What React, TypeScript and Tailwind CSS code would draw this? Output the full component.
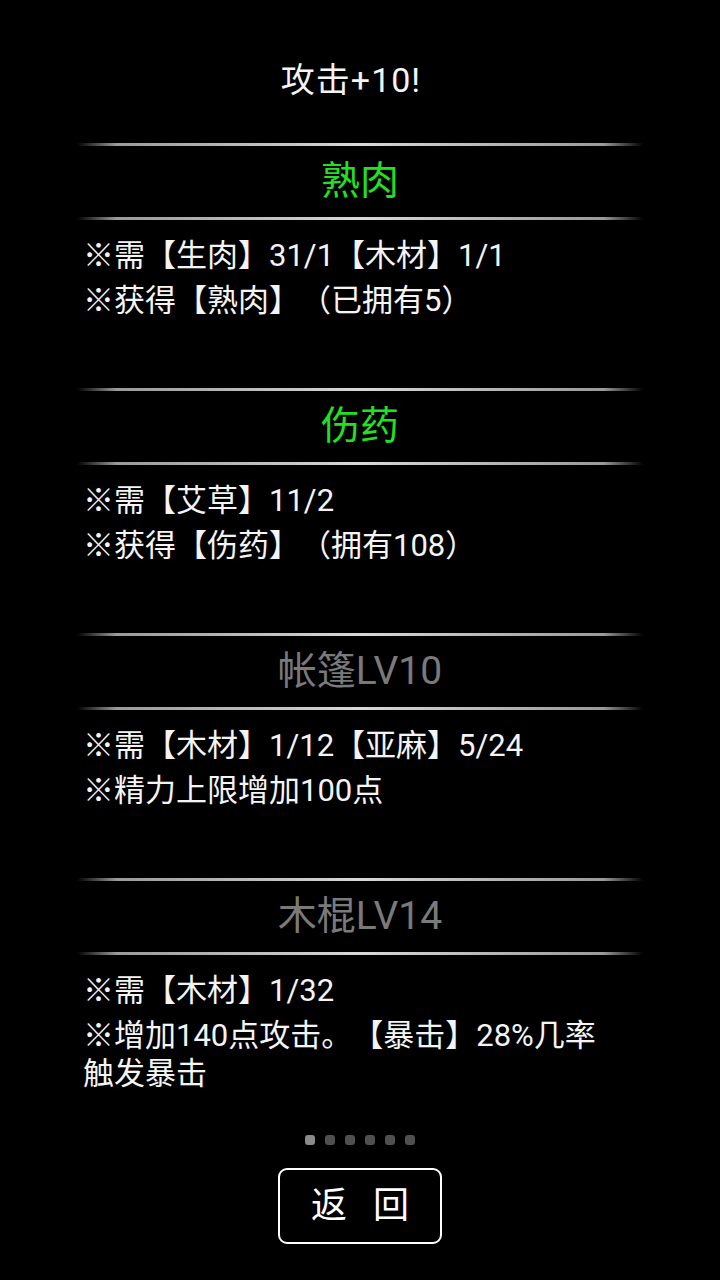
import React from "react";

type Recipe = {
  title: string;
  active: boolean;
  lines: string[];
};

const recipes: Recipe[] = [
  { title: "熟肉", active: true, lines: ["※需【生肉】31/1【木材】1/1", "※获得【熟肉】（已拥有5）"] },
  { title: "伤药", active: true, lines: ["※需【艾草】11/2", "※获得【伤药】（拥有108）"] },
  { title: "帐篷LV10", active: false, lines: ["※需【木材】1/12【亚麻】5/24", "※精力上限增加100点"] },
  { title: "木棍LV14", active: false, lines: ["※需【木材】1/32", "※增加140点攻击。【暴击】28%几率触发暴击"] },
];

function Divider() {
  return (
    <div className="h-[3px] w-full bg-[linear-gradient(to_right,transparent_0%,#9a9a9a_7%,#d8d8d8_50%,#9a9a9a_93%,transparent_100%)]" />
  );
}

function Section({ r }: { r: Recipe }) {
  return (
    <div className="flex h-[245px] flex-col">
      <Divider />
      <div
        className={
          "flex h-[71px] items-center justify-center text-[39px] leading-none " +
          (r.active ? "text-[#22e022]" : "text-[#7a7a7a]")
        }
      >
        {r.title}
      </div>
      <Divider />
      <div className="flex flex-col gap-[7px] pl-[6px] pr-[30px] pt-[17px]">
        {r.lines.map((l) => (
          <p key={l} className="text-[31px] leading-[38px] text-[#f4f4f4] [text-spacing-trim:space-all]">
            {l}
          </p>
        ))}
      </div>
    </div>
  );
}

export default function App() {
  return (
    <div
      className="flex h-[1280px] w-[720px] flex-col items-center bg-black text-white"
      style={{ fontFamily: "Roboto, 'Noto Sans CJK SC', sans-serif" }}
    >
      <div className="flex h-[143px] w-full items-start justify-center pr-[18px] pt-[60px]">
        <span className="text-[34px] leading-[40px] tracking-[1px] text-[#f4f4f4]">攻击+10!</span>
      </div>

      <div className="flex w-[566px] flex-col">
        {recipes.map((r) => (
          <Section key={r.title} r={r} />
        ))}
      </div>

      <div className="mt-[12px] flex gap-[10px]">
        {[0, 1, 2, 3, 4, 5].map((i) => (
          <span
            key={i}
            className={"h-[10px] w-[10px] rounded-[3px] " + (i === 0 ? "bg-[#8a8a8a]" : "bg-[#505050]")}
          />
        ))}
      </div>

      <button
        type="button"
        className="mt-[23px] flex h-[76px] w-[164px] items-center justify-center gap-[26px] rounded-[9px] border-2 border-white text-[36px] leading-none text-white"
      >
        <span>返</span>
        <span>回</span>
      </button>
    </div>
  );
}
